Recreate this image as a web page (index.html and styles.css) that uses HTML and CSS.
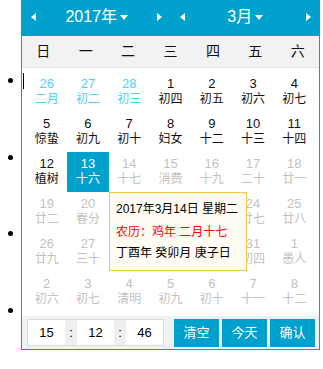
FILE: index.html
```html
<!DOCTYPE html>
<html lang="zh-CN">
<head>
<meta charset="utf-8">
<title>日期选择</title>
<link rel="stylesheet" href="styles.css">
</head>
<body>
<ul class="list">
  <li></li>
  <li></li>
  <li></li>
  <li></li>
</ul>
<div class="laydate">
  <div class="ld-header">
    <div class="ld-half">
      <span class="arrow-left"></span>
      <span class="ld-title">2017年<span class="caret-down"></span></span>
      <span class="arrow-right"></span>
    </div>
    <div class="ld-half">
      <span class="arrow-left"></span>
      <span class="ld-title">3月<span class="caret-down"></span></span>
      <span class="arrow-right"></span>
    </div>
  </div>
  <div class="ld-week">
    <span>日</span><span>一</span><span>二</span><span>三</span><span>四</span><span>五</span><span>六</span>
  </div>
  <div class="ld-body">
    <div class="ld-grid">
      <div class="cell prev"><span class="num">26</span><span class="lunar">二月</span></div>
      <div class="cell prev"><span class="num">27</span><span class="lunar">初二</span></div>
      <div class="cell prev"><span class="num">28</span><span class="lunar">初三</span></div>
      <div class="cell"><span class="num">1</span><span class="lunar">初四</span></div>
      <div class="cell"><span class="num">2</span><span class="lunar">初五</span></div>
      <div class="cell"><span class="num">3</span><span class="lunar">初六</span></div>
      <div class="cell"><span class="num">4</span><span class="lunar">初七</span></div>

      <div class="cell"><span class="num">5</span><span class="lunar">惊蛰</span></div>
      <div class="cell"><span class="num">6</span><span class="lunar">初九</span></div>
      <div class="cell"><span class="num">7</span><span class="lunar">初十</span></div>
      <div class="cell"><span class="num">8</span><span class="lunar">妇女</span></div>
      <div class="cell"><span class="num">9</span><span class="lunar">十二</span></div>
      <div class="cell"><span class="num">10</span><span class="lunar">十三</span></div>
      <div class="cell"><span class="num">11</span><span class="lunar">十四</span></div>

      <div class="cell"><span class="num">12</span><span class="lunar">植树</span></div>
      <div class="cell selected"><span class="num">13</span><span class="lunar">十六</span></div>
      <div class="cell off"><span class="num">14</span><span class="lunar">十七</span></div>
      <div class="cell off"><span class="num">15</span><span class="lunar">消费</span></div>
      <div class="cell off"><span class="num">16</span><span class="lunar">十九</span></div>
      <div class="cell off"><span class="num">17</span><span class="lunar">二十</span></div>
      <div class="cell off"><span class="num">18</span><span class="lunar">廿一</span></div>

      <div class="cell off"><span class="num">19</span><span class="lunar">廿二</span></div>
      <div class="cell off"><span class="num">20</span><span class="lunar">春分</span></div>
      <div class="cell off"><span class="num">21</span><span class="lunar">廿四</span></div>
      <div class="cell off"><span class="num">22</span><span class="lunar">廿五</span></div>
      <div class="cell off"><span class="num">23</span><span class="lunar">廿六</span></div>
      <div class="cell off"><span class="num">24</span><span class="lunar">廿七</span></div>
      <div class="cell off"><span class="num">25</span><span class="lunar">廿八</span></div>

      <div class="cell off"><span class="num">26</span><span class="lunar">廿九</span></div>
      <div class="cell off"><span class="num">27</span><span class="lunar">三十</span></div>
      <div class="cell off"><span class="num">28</span><span class="lunar">三月</span></div>
      <div class="cell off"><span class="num">29</span><span class="lunar">初二</span></div>
      <div class="cell off"><span class="num">30</span><span class="lunar">初三</span></div>
      <div class="cell off"><span class="num">31</span><span class="lunar">初四</span></div>
      <div class="cell off"><span class="num">1</span><span class="lunar">愚人</span></div>

      <div class="cell off"><span class="num">2</span><span class="lunar">初六</span></div>
      <div class="cell off"><span class="num">3</span><span class="lunar">初七</span></div>
      <div class="cell off"><span class="num">4</span><span class="lunar">清明</span></div>
      <div class="cell off"><span class="num">5</span><span class="lunar">初九</span></div>
      <div class="cell off"><span class="num">6</span><span class="lunar">初十</span></div>
      <div class="cell off"><span class="num">7</span><span class="lunar">十一</span></div>
      <div class="cell off"><span class="num">8</span><span class="lunar">十二</span></div>
    </div>
  </div>
  <div class="ld-footer">
    <div class="time">
      <span class="tf">15</span><span class="sep">:</span><span class="tf">12</span><span class="sep">:</span><span class="tf">46</span>
    </div>
    <div class="btns">
      <span class="btn">清空</span><span class="btn">今天</span><span class="btn">确认</span>
    </div>
  </div>
  <div class="tip">
    <div class="t1">2017年3月14日 星期二</div>
    <div class="t2">农历：鸡年 二月十七</div>
    <div class="t3">丁酉年 癸卯月 庚子日</div>
  </div>
  <span class="cursor"></span>
</div>
</body>
</html>
```

FILE: styles.css
```css
html, body {
  margin: 0;
  background: #fff;
}

body {
  font-family: "Liberation Serif", serif;
  font-size: 16px;
}

.list {
  margin: 0;
  padding: 71px 0 0 24px;
}

.list li {
  height: 76.67px;
}

.laydate {
  position: absolute;
  left: 21px;
  top: -1px;
  width: 297px;
  border: 1px solid #00a1cc;
  background: #fff;
  font-family: "Liberation Sans", "Noto Sans CJK SC", sans-serif;
}

.ld-header {
  display: flex;
  height: 36px;
  background: #00a1cc;
  color: #fff;
}

.ld-half {
  flex: 1;
  display: flex;
  align-items: center;
  justify-content: space-between;
  padding: 0 8px 2px 9px;
}

.arrow-left {
  width: 0;
  height: 0;
  border-top: 4px solid transparent;
  border-bottom: 4px solid transparent;
  border-right: 5px solid #fff;
}

.arrow-right {
  width: 0;
  height: 0;
  border-top: 4px solid transparent;
  border-bottom: 4px solid transparent;
  border-left: 5px solid #fff;
}

.ld-title {
  display: flex;
  align-items: center;
  font-size: 16px;
  line-height: 20px;
  height: 20px;
}

.caret-down {
  width: 0;
  height: 0;
  margin-left: 3px;
  border-left: 4.5px solid transparent;
  border-right: 4.5px solid transparent;
  border-top: 5px solid #fff;
}

.ld-week {
  display: grid;
  grid-template-columns: repeat(7, 1fr);
  height: 31px;
  background: #f2f2f2;
  border-bottom: 1px solid #e2e2e2;
  font-size: 14px;
  line-height: 31px;
  text-align: center;
  color: #111;
}

.ld-body {
  padding: 4px;
}

.ld-grid {
  display: grid;
  grid-template-columns: repeat(7, 1fr);
  grid-auto-rows: 40px;
}

.cell {
  box-sizing: border-box;
  padding-top: 4px;
  text-align: center;
  color: #111;
}

.num {
  display: block;
  font-size: 13px;
  line-height: 16px;
}

.lunar {
  display: block;
  font-size: 12px;
  line-height: 14px;
}

.cell.prev {
  color: #52cff5;
}

.cell.off {
  color: #c2c2c2;
}

.cell.selected {
  background: #00a1cc;
  color: #fff;
}

.ld-footer {
  display: flex;
  justify-content: space-between;
  align-items: flex-start;
  height: 33px;
  box-sizing: border-box;
  padding: 3px 4px 0 5px;
  background: #f2f2f2;
}

.time {
  display: flex;
  box-sizing: border-box;
  width: 137px;
  height: 27px;
  border: 1px solid #dcdcdc;
  background: #fff;
  font-size: 13px;
  line-height: 25px;
  color: #000;
}

.tf {
  flex: 1;
  text-align: center;
}

.sep {
  width: 12px;
  background: #efefef;
  text-align: center;
}

.btns {
  display: flex;
  gap: 3px;
}

.btn {
  width: 45px;
  height: 28px;
  background: #00a1cc;
  color: #fff;
  font-size: 13px;
  line-height: 28px;
  text-align: center;
}

.tip {
  position: absolute;
  left: 87px;
  top: 192px;
  box-sizing: border-box;
  width: 138px;
  height: 79px;
  padding: 6px 0 0 6px;
  border: 1px solid #f5c443;
  background: #fffdf3;
  font-size: 12px;
  color: #000;
  white-space: nowrap;
}

.t1 {
  line-height: 21px;
}

.t2 {
  margin-top: 2px;
  line-height: 21px;
  color: #ff0000;
}

.t3 {
  line-height: 20px;
}

.cursor {
  position: absolute;
  left: 1px;
  top: 73px;
  width: 1px;
  height: 16px;
  background: #000;
}
```
